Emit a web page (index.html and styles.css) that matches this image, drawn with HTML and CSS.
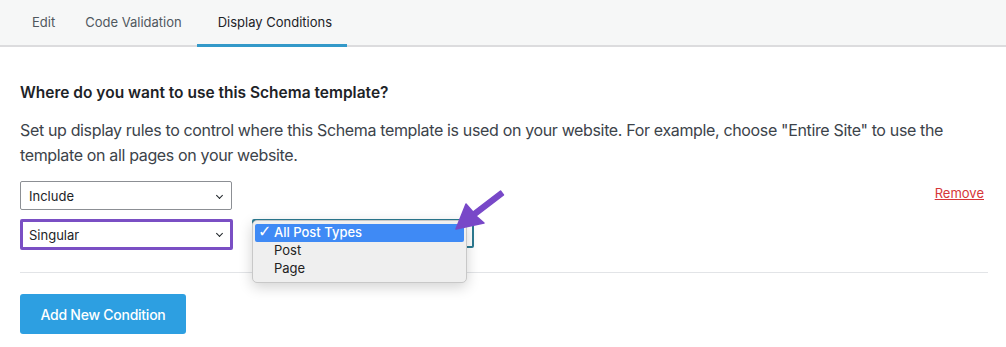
FILE: index.html
```html
<!DOCTYPE html>
<html lang="en">
<head>
    <meta charset="UTF-8">
    <title>Display Conditions</title>
    <link rel="stylesheet" href="styles.css">
</head>
<body>
    <nav class="tabs">
        <a class="tab">Edit</a>
        <a class="tab">Code Validation</a>
        <a class="tab active">Display Conditions</a>
    </nav>

    <main class="panel">
        <h2>Where do you want to use this Schema template?</h2>
        <p class="description">Set up display rules to control where this Schema template is used on your website. For example, choose "Entire Site" to use the template on all pages on your website.</p>

        <div class="condition-row">
            <div class="select">Include</div>
            <a class="remove">Remove</a>
        </div>

        <div class="condition-row second">
            <div class="select highlighted">Singular</div>
            <div class="select focused">
                <ul class="menu">
                    <li class="selected"><span class="check">✓</span>All Post Types</li>
                    <li>Post</li>
                    <li>Page</li>
                </ul>
            </div>
            <svg class="pointer" width="60" height="60" viewBox="0 0 60 60">
                <path d="M6 50 L16 25 L23 33 L50.5 12 L53.5 16 L26 37 L34 44 Z" fill="#7848c8" stroke="#7848c8" stroke-width="1.5" stroke-linejoin="round"/>
            </svg>
        </div>

        <hr class="divider">

        <button class="add-button">Add New Condition</button>
    </main>
</body>
</html>
```

FILE: styles.css
```css
* {
    margin: 0;
    padding: 0;
    box-sizing: border-box;
}

body {
    font-family: 'Inter', 'Noto Sans', sans-serif;
    color: #1d2327;
    background: #ffffff;
}

.tabs {
    display: flex;
    height: 47px;
    padding-left: 17px;
    background: #f6f7f7;
    border-bottom: 2px solid #dcdcde;
}

.tab {
    display: flex;
    align-items: center;
    padding: 0 15px 1px;
    margin-bottom: -2px;
    font-size: 13px;
    color: #50575e;
    border-bottom: 3px solid transparent;
}

.tab.active {
    color: #1d2327;
    border-bottom-color: #3399c9;
    padding-left: 21px;
}

.panel {
    padding: 36px 18px 0 20px;
}

h2 {
    font-size: 15.5px;
    font-weight: 600;
    line-height: 20px;
    color: #1d2327;
}

.description {
    margin-top: 15px;
    font-size: 16px;
    line-height: 25px;
    color: #3c434a;
    letter-spacing: -0.35px;
}

.condition-row {
    display: flex;
    align-items: center;
    margin-top: 13px;
    position: relative;
}

.condition-row.second {
    margin-top: 9px;
    gap: 19px;
}

.select {
    position: relative;
    width: 212px;
    height: 29px;
    padding: 0 8px;
    display: flex;
    align-items: center;
    font-size: 13px;
    color: #1d2327;
    border: 1px solid #8c8f94;
    border-radius: 2px;
    background: #fff;
}

.select::after {
    content: "";
    position: absolute;
    right: 9px;
    top: 11px;
    width: 4px;
    height: 4px;
    border-right: 1.5px solid #1d2327;
    border-bottom: 1.5px solid #1d2327;
    transform: rotate(45deg);
}

.select.highlighted {
    width: 213px;
    height: 31px;
    border: 3px solid #7a4fc4;
    padding-left: 6px;
}

.select.highlighted::after {
    right: 8px;
    top: 9px;
}

.select.focused {
    width: 222px;
    border: 2px solid #2c7a91;
    align-self: flex-start;
}

.select.focused::after {
    display: none;
}

.remove {
    margin-left: auto;
    margin-right: 4px;
    margin-top: -5px;
    font-size: 13px;
    color: #d63638;
    text-decoration: underline;
}

.menu {
    position: absolute;
    left: -2px;
    top: -1px;
    width: 215px;
    height: 63px;
    padding: 3px 2px;
    list-style: none;
    background: #efefef;
    border: 1px solid #c8c8c8;
    border-radius: 5px;
    box-shadow: 0 4px 14px rgba(0, 0, 0, 0.18);
    font-size: 13px;
    color: #222;
}

.menu li {
    height: 18px;
    line-height: 17px;
    padding-left: 19px;
    position: relative;
}

.menu li.selected {
    background: #3f8af5;
    color: #fff;
    font-weight: 500;
    border-radius: 2px;
}

.check {
    position: absolute;
    left: 3px;
    top: -1px;
    font-size: 16px;
    font-family: 'DejaVu Sans', sans-serif;
}

.pointer {
    position: absolute;
    left: 430px;
    top: -40px;
}

.divider {
    border: none;
    border-top: 1px solid #e2e4e7;
    margin-top: 22px;
}

.add-button {
    margin-top: 21px;
    width: 166px;
    height: 40px;
    background: #2d9fe1;
    color: #fff;
    border: none;
    border-radius: 3px;
    font-family: inherit;
    font-size: 14px;
    font-weight: 500;
    letter-spacing: -0.25px;
}
```
